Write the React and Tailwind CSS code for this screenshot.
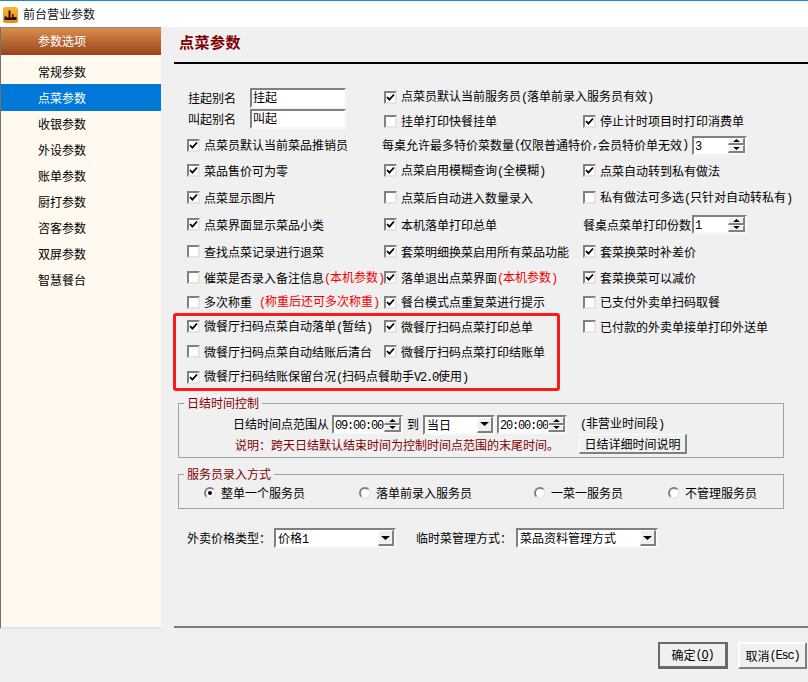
import React from "react";

function T({ children }) {
  const parts = String(children).split(/([\x20-\x7e]+)/);
  return parts.map((p, i) =>
    /^[\x20-\x7e]+$/.test(p) ? (
      <span key={i} className="font-['Liberation_Mono'] tracking-[-1.2px] whitespace-pre">{p}</span>
    ) : (
      <React.Fragment key={i}>{p}</React.Fragment>
    )
  );
}

function Check({ on, label, red, redClass = "" }) {
  return (
    <div className="flex items-center whitespace-nowrap">
      <span className="w-[13px] h-[13px] shrink-0 bg-white border-2 border-t-[#808080] border-l-[#808080] border-r-[#e4e4e4] border-b-[#e4e4e4] flex items-center justify-center">
        {on && (
          <svg width="9" height="9" viewBox="0 0 9 9">
            <path d="M1 4 L3.4 6.6 L8 1.5" fill="none" stroke="#000" strokeWidth="1.8" />
          </svg>
        )}
      </span>
      <span className="ml-[4px]"><T>{label}</T></span>
      {red && <span className={"text-[#f00000] " + redClass}><T>{red}</T></span>}
    </div>
  );
}

function Tri({ up, size = 4 }) {
  return (
    <svg width={size * 2 + 1} height={size} viewBox="0 0 9 4">
      <path d={up ? "M4.5 0 L9 4 L0 4 Z" : "M0 0 L9 0 L4.5 4 Z"} fill="#000" />
    </svg>
  );
}

function Raised({ children, className = "" }) {
  return (
    <span className={"flex items-center justify-center bg-[#f0f0f0] border-t border-l border-t-white border-l-white border-r-2 border-b-2 border-r-[#808080] border-b-[#808080] " + className}>
      {children}
    </span>
  );
}

function Spin({ value, className = "" }) {
  return (
    <div className={"h-[19px] flex bg-white border-2 border-t-[#808080] border-l-[#808080] border-r-[#f8f8f8] border-b-[#f8f8f8] " + className}>
      <span className="flex-1 pl-px leading-[13px] text-[12px]"><T>{value}</T></span>
      <span className="w-[17px] flex flex-col">
        <Raised className="h-[8px] flex-1"><Tri up size={3} /></Raised>
        <Raised className="h-[8px] flex-1"><Tri size={3} /></Raised>
      </span>
    </div>
  );
}

function Select({ value, className = "" }) {
  return (
    <div className={"h-[20px] flex bg-white border-2 border-t-[#808080] border-l-[#808080] border-r-[#f8f8f8] border-b-[#f8f8f8] " + className}>
      <span className="flex-1 pl-[2px] leading-[16px] whitespace-nowrap"><T>{value}</T></span>
      <Raised className="w-[16px]"><Tri size={4} /></Raised>
    </div>
  );
}

function Radio({ on, label, className = "" }) {
  return (
    <div className={"flex items-center " + className}>
      <span className="w-[12px] h-[12px] rounded-full bg-white border-2 border-t-[#808080] border-l-[#808080] border-r-[#e8e8e8] border-b-[#e8e8e8] flex items-center justify-center">
        {on && <span className="w-[4px] h-[4px] rounded-full bg-black" />}
      </span>
      <span className="ml-[5px]"><T>{label}</T></span>
    </div>
  );
}

function TextBox({ value }) {
  return (
    <div className="w-[96px] h-[20px] bg-white border-2 border-t-[#808080] border-l-[#808080] border-r-[#f8f8f8] border-b-[#f8f8f8] pl-px leading-[14px]">{value}</div>
  );
}

function Field({ title, className = "", children }) {
  return (
    <div className={"relative ml-[4px] w-[606px] border border-[#a0a0a0] " + className}>
      <span className="absolute -top-[9px] left-[5px] px-[3px] bg-[#f0f0f0] text-[#800000] leading-[16px]">{title}</span>
      {children}
    </div>
  );
}

const items = ["常规参数", "点菜参数", "收银参数", "外设参数", "账单参数", "厨打参数", "咨客参数", "双屏参数", "智慧餐台"];

export default function App() {
  return (
    <div className="w-[808px] h-[682px] flex flex-col overflow-hidden bg-[#f0f0f0] text-black text-[12px] leading-[16px] font-['Noto_Sans_CJK_SC',sans-serif]">
      {/* title bar */}
      <div className="h-[27px] shrink-0 bg-white border-t border-t-[#1a86d8] flex items-center pl-[3px]">
        <svg width="15" height="16" viewBox="0 0 15 16" className="mt-px">
          <defs>
            <linearGradient id="g" x1="0" y1="0" x2="0" y2="1">
              <stop offset="0" stopColor="#f7b733" />
              <stop offset="1" stopColor="#ee8a1c" />
            </linearGradient>
          </defs>
          <rect width="15" height="16" rx="2.5" fill="url(#g)" />
          <path d="M1.5 13 L1.5 9.5 L4 9.5 L4 10.5 L5.5 10.5 L5.5 3.5 L7.5 3.5 L7.5 10.5 L9 10.5 L9 7 L10.5 7 L10.5 10 L13.5 10 L13.5 13 Z" fill="#241508" />
        </svg>
        <span className="ml-[5px] text-[#101010]">前台营业参数</span>
      </div>

      {/* body */}
      <div className="h-[602px] shrink-0 flex">
        {/* sidebar */}
        <div className="w-[161px] shrink-0 flex flex-col bg-[#fff9f0] border-l border-l-[#707070] border-t border-t-[#8a8a8a] border-b-2 border-b-[#e6e6e6]">
          <div className="h-[27px] shrink-0 flex items-center pl-[37px] pb-[2px] text-white bg-gradient-to-b from-[#d98f4c] to-[#99431e]">参数选项</div>
          <div className="pt-[4px]">
            {items.map((t, i) => (
              <div
                key={t}
                className={
                  i === 1
                    ? "h-[27px] -mt-px flex items-center pl-[37px] bg-[#0078d7] text-white"
                    : "h-[26px] flex items-center pl-[37px]"
                }
              >
                {t}
              </div>
            ))}
          </div>
        </div>

        {/* main */}
        <div className="relative ml-[13px] flex-1 flex flex-col">
          <div className="h-[37px] shrink-0 border-b-2 border-b-black pl-[5px] pt-[7px] text-[15px] tracking-[0.5px] font-bold text-[#800000]">点菜参数</div>

          <div className="ml-[13px] mt-[21px] grid grid-cols-[197px_199px_1fr] grid-rows-[24px_24px_24px_27px_27px_27px_27px_25px_24px_25px_25px_26px] items-center whitespace-nowrap">
            <div className="row-span-2 self-start pt-[3px] pl-px flex flex-col gap-px">
              <div className="flex items-center gap-[14px] h-[20px]">挂起别名<TextBox value="挂起" /></div>
              <div className="flex items-center gap-[14px] h-[20px]">叫起别名<TextBox value="叫起" /></div>
            </div>
            <div className="col-span-2"><Check on label="点菜员默认当前服务员(落单前录入服务员有效)" /></div>

            <div><Check label="挂单打印快餐挂单" /></div>
            <div><Check on label="停止计时项目时打印消费单" /></div>

            <div><Check on label="点菜员默认当前菜品推销员" /></div>
            <div className="col-span-2 -ml-[2px] flex items-center">
              <T>每桌允许最多特价菜数量(仅限普通特价,会员特价单无效)</T>
              <Spin value="3" className="w-[55px] ml-[4px]" />
            </div>

            <div><Check on label="菜品售价可为零" /></div>
            <div><Check on label="点菜启用模糊查询(全模糊)" /></div>
            <div><Check on label="点菜自动转到私有做法" /></div>

            <div><Check on label="点菜显示图片" /></div>
            <div><Check label="点菜后自动进入数量录入" /></div>
            <div><Check label="私有做法可多选(只针对自动转私有)" /></div>

            <div><Check on label="点菜界面显示菜品小类" /></div>
            <div><Check on label="本机落单打印总单" /></div>
            <div className="flex items-center">
              餐桌点菜单打印份数
              <Spin value="1" className="w-[55px] ml-px" />
            </div>

            <div><Check label="查找点菜记录进行退菜" /></div>
            <div><Check on label="套菜明细换菜启用所有菜品功能" /></div>
            <div><Check on label="套菜换菜时补差价" /></div>

            <div><Check label="催菜是否录入备注信息" red="(本机参数)" /></div>
            <div><Check on label="落单退出点菜界面" red="(本机参数)" /></div>
            <div><Check on label="套菜换菜可以减价" /></div>

            <div><Check label="多次称重" red="(称重后还可多次称重)" redClass="ml-[7px]" /></div>
            <div><Check on label="餐台模式点重复菜进行提示" /></div>
            <div><Check label="已支付外卖单扫码取餐" /></div>

            <div><Check on label="微餐厅扫码点菜自动落单(暂结)" /></div>
            <div><Check on label="微餐厅扫码点菜打印总单" /></div>
            <div><Check label="已付款的外卖单接单打印外送单" /></div>

            <div><Check label="微餐厅扫码点菜自动结账后清台" /></div>
            <div className="col-span-2"><Check on label="微餐厅扫码点菜打印结账单" /></div>

            <div className="col-span-3"><Check on label="微餐厅扫码结账保留台况(扫码点餐助手V2.0使用)" /></div>
          </div>

          {/* red annotation */}
          <div className="absolute left-[-1px] top-[286px] w-[387px] h-[78px] border-[3px] border-[#fb1b1b] rounded-[3px] pointer-events-none" />

          <Field title="日结时间控制" className="mt-[13px] h-[55px]">
            <div className="pt-[11px] pl-[55px] flex items-center h-[30px]">
              <span className="-mt-[2px] -ml-px">日结时间点范围从</span>
              <Spin value="09:00:00" className="w-[71px] ml-[3px]" />
              <span className="ml-[4px] -mt-[2px]">到</span>
              <Select value="当日" className="w-[72px] ml-[4px]" />
              <Spin value="20:00:00" className="w-[70px] ml-[2px]" />
              <span className="ml-[13px] -mt-[2px]"><T>(非营业时间段)</T></span>
            </div>
            <div className="pl-[56px] flex items-center h-[20px]">
              <span className="text-[#800000] mt-[2px]">说明：跨天日结默认结束时间为控制时间点范围的末尾时间。</span>
              <Raised className="ml-[20px] w-[108px] h-[20px]">日结详细时间说明</Raised>
            </div>
          </Field>

          <Field title="服务员录入方式" className="mt-[16px] h-[35px]">
            <div className="h-[33px] pt-[2px] flex items-center">
              <Radio on label="整单一个服务员" className="ml-[25px] w-[155px]" />
              <Radio label="落单前录入服务员" className="w-[175px]" />
              <Radio label="一菜一服务员" className="w-[134px]" />
              <Radio label="不管理服务员" />
            </div>
          </Field>

          <div className="mt-[19px] flex items-center">
            <span className="ml-[13px] w-[87px]">外卖价格类型：</span>
            <Select value="价格1" className="w-[122px]" />
            <span className="ml-[20px] w-[100px]">临时菜管理方式：</span>
            <Select value="菜品资料管理方式" className="w-[142px]" />
          </div>

          <div className="flex-1" />
          <div className="h-[2px] bg-[#7a7a7a] -translate-y-px" />
        </div>
      </div>

      {/* footer */}
      <div className="flex-1 flex justify-end items-start pt-[13px] pr-px">
        <span className="w-[70px] h-[27px] flex items-center justify-center bg-[#f0f0f0] border-2 border-[#696969] border-r-[3px] border-b-[3px]"><T>确定(</T><span className="underline"><T>O</T></span><T>)</T></span>
        <span className="ml-[10px] w-[69px] h-[27px] flex items-center justify-center bg-[#f0f0f0] border-t-2 border-l-2 border-t-white border-l-white border-r-2 border-b-2 border-r-[#808080] border-b-[#808080]"><T>取消(Esc)</T></span>
      </div>
    </div>
  );
}
